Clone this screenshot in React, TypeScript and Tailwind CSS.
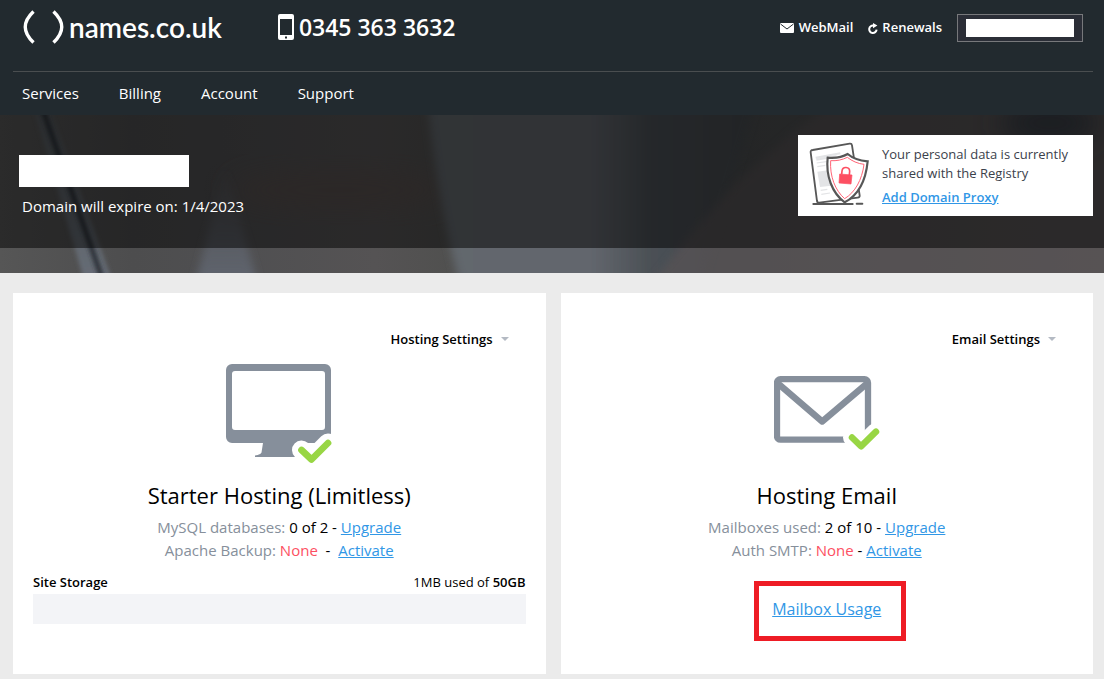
import type { ReactNode } from 'react'

const NAV = ['Services', 'Billing', 'Account', 'Support']

const LINK = 'text-[#3197e6] underline'

function Logo() {
  return (
    <a href="#" className="flex items-center gap-1 text-white">
      <svg width="42" height="34" viewBox="0 0 42 34" fill="none" stroke="currentColor" strokeWidth="3.4" aria-hidden="true">
        <path d="M10.5 1.5C-.5 12-.5 22 10.5 32.5" />
        <path d="M30.5 1.5C41.5 12 41.5 22 30.5 32.5" />
      </svg>
      <span className="font-['Lato'] text-[28px] leading-8 font-semibold">names.co.uk</span>
    </a>
  )
}

function PhoneIcon() {
  return (
    <svg width="16" height="26" viewBox="0 0 16 26" aria-hidden="true">
      <path
        fill="#fff"
        fillRule="evenodd"
        d="M2 0h12a2 2 0 0 1 2 2v22a2 2 0 0 1-2 2H2a2 2 0 0 1-2-2V2a2 2 0 0 1 2-2ZM2 5v16h12V5ZM7 22.5v2h2v-2Z"
      />
    </svg>
  )
}

function MailIcon() {
  return (
    <svg width="14" height="10" viewBox="0 0 14 10" aria-hidden="true">
      <rect width="14" height="10" rx="1" fill="#fff" />
      <path d="M.5 1 7 6l6.5-5" fill="none" stroke="#222a2f" strokeWidth="1" />
    </svg>
  )
}

function RenewIcon() {
  return (
    <svg width="10" height="11" viewBox="0 0 10 11" fill="none" aria-hidden="true">
      <path d="M5.5 2.6A3.7 3.7 0 1 0 8.6 6.6" stroke="#fff" strokeWidth="2" />
      <path d="M5 0 9.4 2.5 5 5.2Z" fill="#fff" />
    </svg>
  )
}

function HeroBackdrop() {
  return (
    <svg
      className="absolute inset-0 size-full"
      viewBox="0 0 1104 158"
      preserveAspectRatio="none"
      aria-hidden="true"
    >
      <defs>
        <linearGradient id="base">
          <stop offset="0" stopColor="#565656" />
          <stop offset=".12" stopColor="#4d4d4e" />
          <stop offset=".2" stopColor="#4f4f51" />
          <stop offset=".34" stopColor="#555354" />
          <stop offset=".41" stopColor="#50504f" />
          <stop offset=".62" stopColor="#474a4c" />
          <stop offset="1" stopColor="#565353" />
        </linearGradient>
        <linearGradient id="cup">
          <stop offset="0" stopColor="#62676d" />
          <stop offset=".5" stopColor="#62666d" />
          <stop offset=".68" stopColor="#4b5055" />
          <stop offset="1" stopColor="#44494d" />
        </linearGradient>
        <linearGradient id="glow" x2="0" y2="1">
          <stop offset="0" stopColor="#60656f" stopOpacity="0" />
          <stop offset="1" stopColor="#60656f" />
        </linearGradient>
        <linearGradient id="edge" x2="0" y2="1">
          <stop offset="0" stopColor="#555a5f" />
          <stop offset="1" stopColor="#666c75" />
        </linearGradient>
        <filter id="soft" x="-20%" y="-20%" width="140%" height="140%">
          <feGaussianBlur stdDeviation="4" />
        </filter>
        <filter id="line" x="-20%" y="-20%" width="140%" height="140%">
          <feGaussianBlur stdDeviation="2" />
        </filter>
        <filter id="haze" x="-50%" y="-50%" width="200%" height="200%">
          <feGaussianBlur stdDeviation="14" />
        </filter>
      </defs>
      <rect width="1104" height="158" fill="url(#base)" />
      <ellipse cx="340" cy="75" rx="110" ry="18" fill="#59504e" filter="url(#haze)" />
      <path d="M428-10Q438 90 460 170H700L755-10Z" fill="url(#cup)" filter="url(#soft)" />
      <path d="M225 50 195 170H258Z" fill="url(#glow)" filter="url(#soft)" />
      <path d="M650 170 690 120 736 68 790 20 830-10H1114V170Z" fill="#585354" filter="url(#soft)" opacity=".7" />
      <ellipse cx="1050" cy="8" rx="50" ry="22" fill="#363b42" filter="url(#haze)" />
      <path d="M34-5H50L112 165H84Z" fill="url(#edge)" filter="url(#line)" />
      <path d="M43-5 102 163" stroke="#2b2d34" strokeWidth="5" filter="url(#line)" />
    </svg>
  )
}

function PrivacyIcon() {
  return (
    <svg width="80" height="81" viewBox="0 0 240 243" fill="none" aria-hidden="true" className="shrink-0">
      <path d="M38 45 149 26Q155 25 156 31L179 181Q180 187 173 188L58 203Q52 204 51 198L32 52Q31 46 38 45Z" stroke="#575757" strokeWidth="5.5" />
      <path d="M47 68 121 55M49 74 110 64" stroke="#e3e4e6" strokeWidth="6" />
      <path d="M50 84 84 79M52 95 76 91M62 166 82 163M64 178 90 174" stroke="#e3e4e6" strokeWidth="3.5" />
      <path d="M52 110 84 106 94 152 60 156Z" fill="#e3e4e6" />
      <path d="M40 207H158M170 206H187" stroke="#575757" strokeWidth="6" strokeLinecap="round" />
      <path d="M143 57C128 66 106 70 83 68 77 122 96 174 134 202 172 182 197 140 203 79 181 77 158 70 143 57Z" fill="#fff" stroke="#575757" strokeWidth="6.5" />
      <path d="M142 67C126 75 110 78 92 77 89 123 105 166 134 191 165 172 186 135 192 88 173 86 156 78 142 67Z" stroke="#ff6476" strokeWidth="3" />
      <path d="m119 117 37 3-3 27-36-3Z" fill="#fd4f62" stroke="#fd4f62" strokeWidth="2" strokeLinejoin="round" />
      <path d="m125 118 1-10c2-15 23-13 23 1l-1 11" stroke="#fd4f62" strokeWidth="5" />
    </svg>
  )
}

function MonitorIcon() {
  return (
    <svg width="106" height="100" viewBox="0 0 106 100" fill="none" aria-hidden="true">
      <path
        fill="#868f9b"
        fillRule="evenodd"
        d="M6 0h93a6 6 0 0 1 6 6v67a6 6 0 0 1-6 6H82v14H29v-1.5c4-.7 6-1.5 6.5-3L37 79H6a6 6 0 0 1-6-6V6a6 6 0 0 1 6-6ZM9 7a3 3 0 0 0-3 3v53a3 3 0 0 0 3 3h87a3 3 0 0 0 3-3V10a3 3 0 0 0-3-3Z"
      />
      <g strokeLinecap="round" strokeLinejoin="round">
        <path d="M75.5 86 85.5 95.5 102 79" stroke="#fff" strokeWidth="19" />
        <path d="M75.5 86 85.5 95.5 102 79" stroke="#98d644" strokeWidth="6.7" />
      </g>
    </svg>
  )
}

function EnvelopeIcon() {
  return (
    <svg width="106" height="76" viewBox="0 0 106 76" fill="none" aria-hidden="true">
      <rect x="3" y="3.2" width="91" height="60.5" rx="3.5" stroke="#868f9b" strokeWidth="6.3" />
      <path d="m4 7.5 44.2 38L93 7.5" stroke="#868f9b" strokeWidth="6.5" strokeLinejoin="round" />
      <g strokeLinecap="round" strokeLinejoin="round">
        <path d="M78 61.5 87 70.3 102 55.7" stroke="#fff" strokeWidth="18" />
        <path d="M78 61.5 87 70.3 102 55.7" stroke="#98d644" strokeWidth="6.5" />
      </g>
    </svg>
  )
}

type ProductCardProps = {
  settings: string
  icon: ReactNode
  title: string
  children: ReactNode
}

function ProductCard({ settings, icon, title, children }: ProductCardProps) {
  return (
    <section className="flex-1 bg-white px-5 pt-9 pb-[50px]">
      <div className="flex justify-end pr-[17px]">
        <button type="button" className="flex items-center gap-2 text-[13px] leading-5 font-semibold">
          {settings}
          <svg width="8" height="4" viewBox="0 0 8 4" aria-hidden="true">
            <path d="M0 0h8L4 4Z" fill="#b4bac3" />
          </svg>
        </button>
      </div>
      <div className="mt-2 flex h-[114px] items-center justify-center">{icon}</div>
      <h2 className="mt-1.5 mb-[3px] text-center text-[22px] leading-9">{title}</h2>
      {children}
    </section>
  )
}

export default function App() {
  return (
    <div className="min-h-screen bg-[#ebebeb] font-['Open_Sans','Noto_Sans',sans-serif] text-black">
      <header className="bg-[#222a2f] pr-[11px] pl-[13px] text-white">
        <div className="flex h-[72px] items-start border-b border-[#4a4e50] px-2.5">
          <div className="flex h-14 flex-1 items-center">
            <div className="flex items-center gap-14 pb-0.5">
              <Logo />
              <a href="tel:03453633632" className="flex items-center gap-[5px] text-[23px] leading-8 font-semibold">
                <PhoneIcon />
                0345 363 3632
              </a>
            </div>
            <div className="ml-auto flex items-center text-[13px] font-semibold">
              <a href="#" className="flex items-center gap-[5px]">
                <MailIcon />
                WebMail
              </a>
              <a href="#" className="ml-[15px] flex items-center gap-1">
                <RenewIcon />
                Renewals
              </a>
              <button type="button" aria-label="Account" className="ml-[15px] h-7 w-[126px] border border-[#77787b] bg-[#2b2e37] px-2 py-1">
                <span className="block h-[18px] bg-white" />
              </button>
            </div>
          </div>
        </div>
        <nav className="flex h-[43px] items-center gap-10 px-[9px] text-[15px]">
          {NAV.map((item) => (
            <a key={item} href="#" className="font-medium">
              {item}
            </a>
          ))}
        </nav>
      </header>

      <div className="relative pb-[25px]">
        <HeroBackdrop />
        <div className="relative flex h-[133px] items-start justify-between bg-black/50 pt-5 pr-[11px] pl-[19px]">
          <div className="pt-5 text-white">
            <div className="h-8 w-[170px] bg-white" />
            <p className="mt-[7px] ml-[3px] text-[15px] leading-6 font-medium">Domain will expire on: 1/4/2023</p>
          </div>
          <aside className="flex w-[295px] bg-white pl-0.5 text-[#3b414b]">
            <PrivacyIcon />
            <div className="pt-2.5 pl-0.5 text-[13px] leading-[19px]">
              <p>
                Your personal data is currently
                <br />
                shared with the Registry
              </p>
              <a href="#" className="mt-[5px] block font-semibold text-[#3197e6] underline">
                Add Domain Proxy
              </a>
            </div>
          </aside>
        </div>
      </div>

      <main className="flex gap-[15px] pt-5 pr-[11px] pb-[5px] pl-[13px]">
        <ProductCard settings="Hosting Settings" icon={<MonitorIcon />} title="Starter Hosting (Limitless)">
          <div className="text-center text-[15px] leading-[23px]">
            <p>
              <span className="text-[#868f9b]">MySQL databases:</span> 0 of 2 -{' '}
              <a href="#" className={LINK}>Upgrade</a>
            </p>
            <p>
              <span className="text-[#868f9b]">Apache Backup:</span> <span className="text-[#fd4f62]">None</span>
              &nbsp; - &nbsp;<a href="#" className={LINK}>Activate</a>
            </p>
          </div>
          <div className="mt-2.5 flex justify-between text-[13px] leading-5">
            <span className="font-semibold">Site Storage</span>
            <span>
              1MB used of <b className="font-semibold">50GB</b>
            </span>
          </div>
          <div className="mt-0.5 h-[30px] bg-[#f3f4f7]" />
        </ProductCard>

        <ProductCard settings="Email Settings" icon={<EnvelopeIcon />} title="Hosting Email">
          <div className="text-center text-[15px] leading-[23px]">
            <p>
              <span className="text-[#868f9b]">Mailboxes used:</span> 2 of 10 -{' '}
              <a href="#" className={LINK}>Upgrade</a>
            </p>
            <p>
              <span className="text-[#868f9b]">Auth SMTP:</span> <span className="text-[#fd4f62]">None</span> -{' '}
              <a href="#" className={LINK}>Activate</a>
            </p>
          </div>
          <div className="mt-[35px] flex justify-center">
            <div className="relative text-base leading-6">
              <a href="#" className={LINK}>Mailbox Usage</a>
              <span className="pointer-events-none absolute -top-4 -right-[25px] -bottom-5 -left-[18px] border-5 border-[#ee1c25]" />
            </div>
          </div>
        </ProductCard>
      </main>
    </div>
  )
}
